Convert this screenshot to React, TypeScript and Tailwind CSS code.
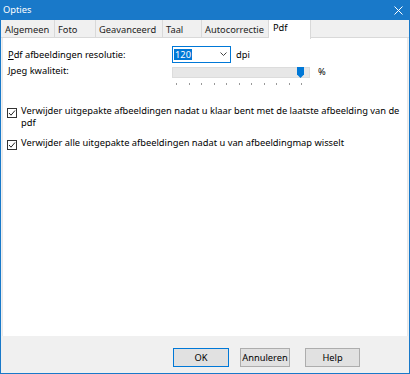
import React from "react";

const font = { fontFamily: '"Noto Sans", "Open Sans", sans-serif', fontSize: "9.3px" };

function Check() {
  return (
    <div className="w-[10px] h-[10px] border border-[#333] bg-white flex items-center justify-center shrink-0">
      <svg width="8" height="8" viewBox="0 0 8 8">
        <path d="M1 4 L3 6.2 L7 1.5" fill="none" stroke="#222" strokeWidth="1" />
      </svg>
    </div>
  );
}

export default function App() {
  const tabs = [
    { t: "Algemeen", w: 53 },
    { t: "Foto", w: 41 },
    { t: "Geavanceerd", w: 67 },
    { t: "Taal", w: 39 },
    { t: "Autocorrectie", w: 67 },
  ];
  const ticks = Array.from({ length: 11 }, (_, i) => i);
  return (
    <div className="w-[410px] h-[374px] bg-[#1979c9] flex flex-col text-black" style={font}>
      <div className="h-[20px] flex items-center justify-between pl-[3px] pr-[7px] text-white shrink-0">
        <span>Opties</span>
        <svg width="9" height="9" viewBox="0 0 9 9">
          <path d="M0.5 0.5 L8.5 8.5 M8.5 0.5 L0.5 8.5" stroke="white" strokeWidth="1" />
        </svg>
      </div>
      <div className="flex-1 mx-[1px] mb-[1px] bg-[#f0f0f0] flex flex-col">
        <div className="h-[18px] flex shrink-0 border-b border-[#d9d9d9]">
          <div className="w-[1px]" />
          {tabs.map((x) => (
            <div
              key={x.t}
              className="h-[17px] border-r border-[#d9d9d9] pl-[3px] text-[#222] leading-[20px] whitespace-nowrap"
              style={{ width: x.w }}
            >
              {x.t}
            </div>
          ))}
          <div className="w-[42px] h-[19px] bg-white pl-[4px] leading-[16px] border-r border-[#d9d9d9] relative z-10">
            Pdf
          </div>
        </div>
        <div className="h-[298px] bg-white mx-[1px] border-x border-[#e8e8e8] flex flex-col pt-[8px]">
          <div className="flex items-center h-[17px]">
            <div className="w-[169px] pl-[5px] whitespace-nowrap">
              <span className="underline">P</span>df afbeeldingen resolutie:
            </div>
            <div className="w-[59px] h-[17px] border border-[#0078d7] flex items-center pl-[1px] pr-[3px] justify-between">
              <span className="bg-[#0078d7] text-white w-[18px] pl-[1px] leading-[11px] h-[11px]">120</span>
              <svg width="7" height="5" viewBox="0 0 7 5">
                <path d="M0.5 0.5 L3.5 3.5 L6.5 0.5" fill="none" stroke="#444" strokeWidth="1" />
              </svg>
            </div>
            <span className="ml-[5px]">dpi</span>
          </div>
          <div className="flex items-start">
            <div className="w-[169px] pl-[5px] leading-[12px] whitespace-nowrap mt-[2px]">
              <span className="underline">J</span>peg kwaliteit:
            </div>
            <div className="flex flex-col mt-[4px]">
              <div className="w-[138px] h-[11px] bg-[#e7e7e7] border border-[#dcdcdc] relative">
                <svg className="absolute left-[124px] top-[-1px]" width="7" height="11" viewBox="0 0 7 11">
                  <path d="M0 0 H7 V7.5 L3.5 11 L0 7.5 Z" fill="#0078d7" />
                </svg>
              </div>
              <div className="relative h-[8px] w-[138px]">
                {ticks.map((i) => (
                  <div
                    key={i}
                    className="absolute top-[5px] w-[1px] h-[2px] bg-[#999]"
                    style={{ left: 4 + i * 12.5 }}
                  />
                ))}
              </div>
            </div>
            <span className="ml-[8px] leading-[12px] mt-[3px]">%</span>
          </div>
          <div className="flex items-start mt-[19px] pl-[4px]">
            <div className="mt-[3px]">
              <Check />
            </div>
            <div className="ml-[4px] leading-[12px] whitespace-nowrap">
              Verwijder uitgepakte afbeeldingen nadat u klaar bent met de laatste afbeelding van de
              <br />
              pdf
            </div>
          </div>
          <div className="flex items-start mt-[8px] pl-[4px]">
            <div className="mt-[3px]">
              <Check />
            </div>
            <div className="ml-[4px] leading-[12px] whitespace-nowrap">
              Verwijder alle uitgepakte afbeeldingen nadat u van afbeeldingmap wisselt
            </div>
          </div>
        </div>
        <div className="flex-1 flex items-start pt-[12px] pl-[172px]">
          <div className="w-[56px] h-[19px] bg-[#e1e1e1] border border-[#0078d7] flex items-center justify-center">OK</div>
          <div className="w-[50px] h-[19px] bg-[#e1e1e1] border border-[#adadad] flex items-center justify-center ml-[11px]">Annuleren</div>
          <div className="w-[55px] h-[19px] bg-[#e1e1e1] border border-[#adadad] flex items-center justify-center ml-[15px]">Help</div>
        </div>
      </div>
    </div>
  );
}
